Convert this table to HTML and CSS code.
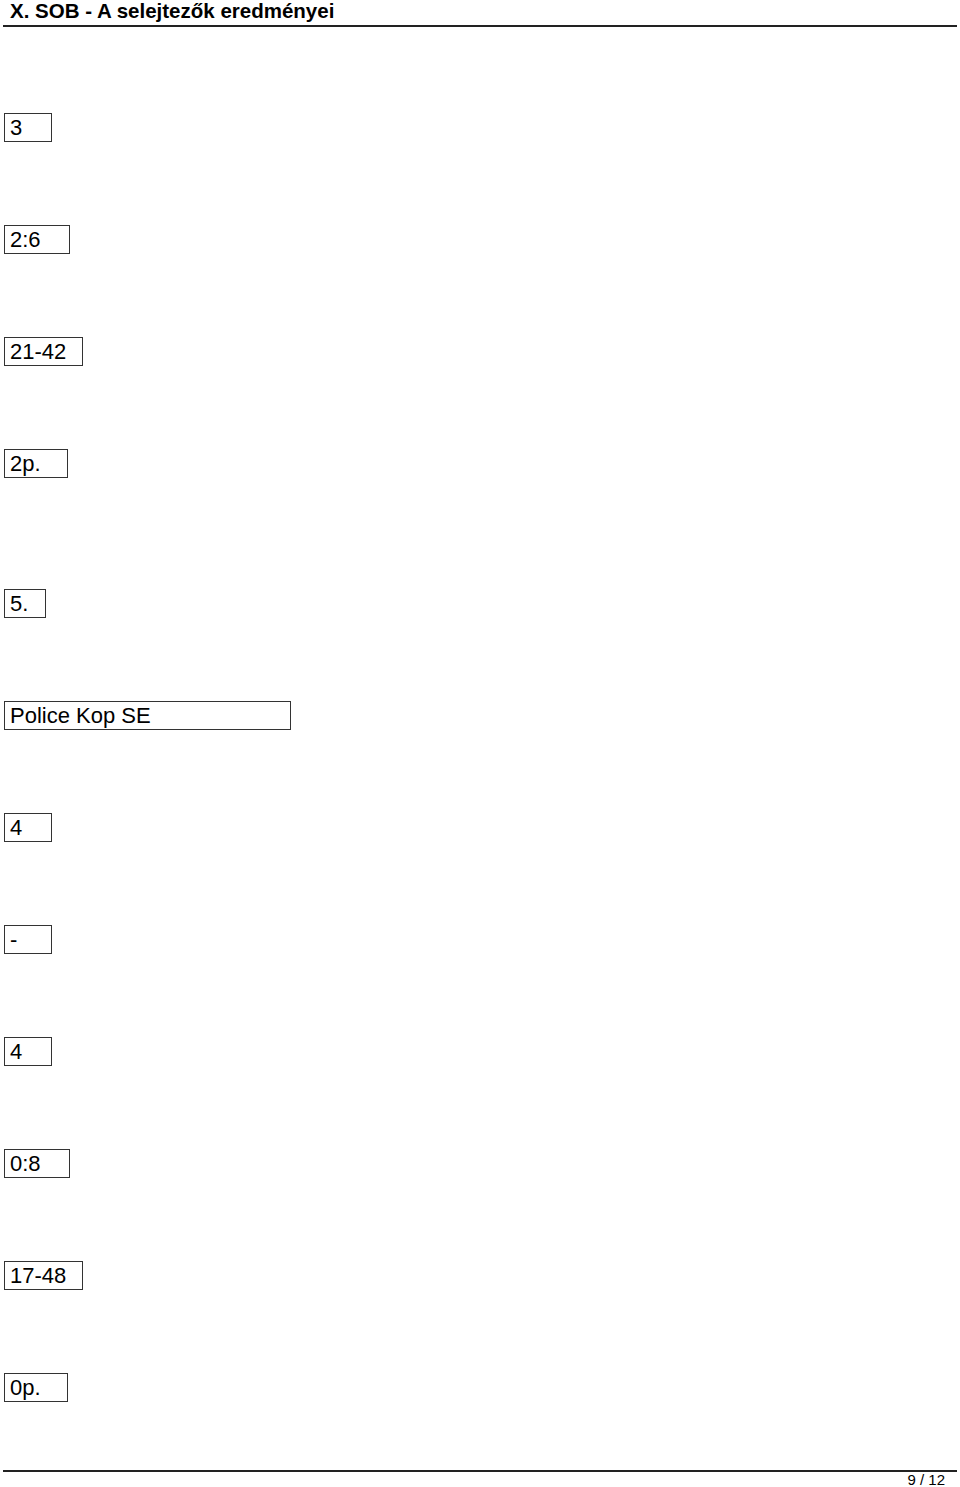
FILE: index.html
```html
<!DOCTYPE html>
<html lang="hu">
<head>
<meta charset="utf-8">
<title>X. SOB - A selejtezők eredményei</title>
<link rel="stylesheet" href="styles.css">
</head>
<body>
<div class="page">
  <header class="header">
    <h1 class="title">X. SOB - A selejtezők eredményei</h1>
  </header>
  <main class="cells">
    <div class="box box--s">3</div>
    <div class="box box--m">2:6</div>
    <div class="box box--l">21-42</div>
    <div class="box box--p">2p.</div>
    <div class="box box--xs box--gap">5.</div>
    <div class="box box--xl">Police Kop SE</div>
    <div class="box box--s">4</div>
    <div class="box box--s">-</div>
    <div class="box box--s">4</div>
    <div class="box box--m">0:8</div>
    <div class="box box--l">17-48</div>
    <div class="box box--p">0p.</div>
  </main>
  <footer class="footer">
    <span class="pager">9 / 12</span>
  </footer>
</div>
</body>
</html>
```

FILE: styles.css
```css
html, body {
  margin: 0;
  padding: 0;
  background: #ffffff;
}

.page {
  width: 960px;
  height: 1487px;
  display: flex;
  flex-direction: column;
  font-family: "Liberation Sans", Arial, sans-serif;
  color: #000;
  overflow: hidden;
}

.header {
  margin: 0 3px;
  height: 25px;
  border-bottom: 2px solid #222;
}

.title {
  margin: 0;
  padding: 0 0 0 7px;
  font-size: 20.5px;
  font-weight: bold;
  line-height: 21px;
}

.cells {
  display: flex;
  flex-direction: column;
  align-items: flex-start;
  gap: 83px;
  padding-left: 4px;
  margin-top: 86px;
}

.box {
  box-sizing: border-box;
  height: 29px;
  border: 1px solid #333;
  padding: 0 0 0 5px;
  font-size: 22px;
  line-height: 27px;
  white-space: nowrap;
}

.box--gap { margin-top: 28px; }
.box--xs { width: 42px; }
.box--s { width: 48px; }
.box--p { width: 64px; }
.box--m { width: 66px; }
.box--l { width: 79px; }
.box--xl { width: 287px; }

.footer {
  margin: auto 3px 0;
  border-top: 2px solid #222;
  display: flex;
  justify-content: flex-end;
  padding-right: 12px;
  height: 15px;
}

.pager {
  font-size: 15px;
  line-height: 16px;
}
```
